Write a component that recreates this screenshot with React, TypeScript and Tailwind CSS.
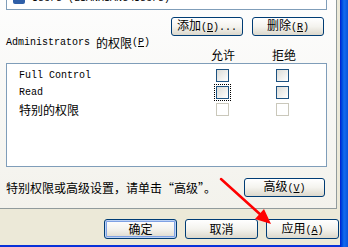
import * as React from 'react'

const CJK = "font-['Noto_Sans_CJK_SC',sans-serif] text-[12px]"
const LAT = "font-['Liberation_Mono','DejaVu_Sans_Mono',monospace] text-[10px]"

function Mixed({ text }: { text: string }): React.JSX.Element {
  // ASCII runs render at the 6px mono width, the rest as 12px CJK
  const runs = text.match(/[\x00-\x7f]+|[^\x00-\x7f]+/g) ?? []
  return (
    <>
      {runs.map((run, i) =>
        /^[\x00-\x7f]/.test(run) ? (
          <span key={i} className={`${LAT} whitespace-pre`}>
            {run}
          </span>
        ) : (
          <span key={i} className={CJK}>
            {run}
          </span>
        )
      )}
    </>
  )
}

function Label({
  text,
  mnemonic,
  suffix = ''
}: {
  text: string
  mnemonic?: string
  suffix?: string
}): React.JSX.Element {
  return (
    <span className="inline-flex items-baseline leading-[12px] text-black">
      <span className={CJK}>{text}</span>
      {mnemonic ? (
        <span className={`${LAT} whitespace-pre`}>
          (<span className="underline">{mnemonic}</span>){suffix}
        </span>
      ) : null}
    </span>
  )
}

function XpButton({
  width,
  isDefault = false,
  children
}: {
  width: string
  isDefault?: boolean
  children: React.ReactNode
}): React.JSX.Element {
  return (
    <div
      className={`${width} flex h-full items-center justify-center rounded-[3px] border border-[#003C74] bg-gradient-to-b from-white via-[#F4F3EE] to-[#DCD8CC] ${
        isDefault ? 'shadow-[inset_0_0_0_1px_#BCD2F5,inset_0_0_0_2px_#7FA1E3]' : ''
      }`}
    >
      {children}
    </div>
  )
}

function Check({ disabled = false }: { disabled?: boolean }): React.JSX.Element {
  return disabled ? (
    <div className="size-[13px] border border-[#CAC8BB] bg-white" />
  ) : (
    <div className="size-[13px] border border-[#1C5180] bg-gradient-to-br from-[#DCDCD7] to-white" />
  )
}

function PermRow({
  name,
  disabled = false,
  focused = false
}: {
  name: string
  disabled?: boolean
  focused?: boolean
}): React.JSX.Element {
  return (
    <div className="flex h-[17px] items-center pl-[12px]">
      <div className="flex w-[197px] items-center leading-[12px]">
        <Mixed text={name} />
      </div>
      <div className="relative">
        <Check disabled={disabled} />
        {focused ? (
          <div className="absolute -inset-[2px] border border-dotted border-black" />
        ) : null}
      </div>
      <div className="ml-[47px]">
        <Check disabled={disabled} />
      </div>
    </div>
  )
}

export default function App(): React.JSX.Element {
  return (
    <div className="relative flex h-[247px] w-[348px] overflow-hidden bg-[#ECE9D8] text-black">
      <div className="flex w-[340px] flex-col">
        <div className="h-[209px] w-[337px] border-r border-b border-[#919B9C] bg-gradient-to-b from-[#FDFDFD] to-[#F3F2EC] pl-[6px]">
          <div className="h-[10px] w-[321px] overflow-hidden border-x border-b border-[#7F9DB9] bg-white">
            <div className="-mt-[9px] flex h-[14px] items-center gap-[7px] pl-[6px]">
              <div className="size-[12px] rounded-[2px] bg-[#2F5FA8]" />
              <Mixed text="Users (LIANXIANG\Users)" />
            </div>
          </div>

          <div className="mt-[7px] flex h-[19px] gap-[9px] pl-[165px]">
            <XpButton width="w-[72px]">
              <Label text="添加" mnemonic="D" suffix="..." />
            </XpButton>
            <XpButton width="w-[72px]">
              <Label text="删除" mnemonic="R" />
            </XpButton>
          </div>

          <div className="mt-[1px] flex h-[12px] items-center leading-[12px]">
            <Mixed text="Administrators 的权限" />
            <span className={`${LAT} whitespace-pre`}>
              (<span className="underline">P</span>)
            </span>
          </div>

          <div className="flex h-[12px] items-center gap-[37px] pl-[205px] leading-[12px]">
            <span className={CJK}>允许</span>
            <span className={CJK}>拒绝</span>
          </div>

          <div className="mt-[2px] h-[104px] w-[321px] border border-[#7F9DB9] bg-white pt-[3px]">
            <PermRow name="Full Control" />
            <PermRow name="Read" focused />
            <PermRow name="特别的权限" disabled />
          </div>

          <div className="mt-[11px] flex h-[19px] w-[321px] items-center pr-[2px]">
            <div className="flex-1 leading-[12px]">
              <span className={CJK}>特别权限或高级设置，请单击“高级”。</span>
            </div>
            <XpButton width="w-[81px]">
              <Label text="高级" mnemonic="V" />
            </XpButton>
          </div>
        </div>

        <div className="mt-[10px] flex h-[20px] gap-[8px] pl-[104px]">
          <XpButton width="w-[73px]" isDefault>
            <Label text="确定" />
          </XpButton>
          <XpButton width="w-[73px]">
            <Label text="取消" />
          </XpButton>
          <XpButton width="w-[73px]">
            <Label text="应用" mnemonic="A" />
          </XpButton>
        </div>
        <div className="mt-auto h-[2px] w-[348px] bg-[#0831D9]" />
      </div>
      <div className="w-[8px] bg-gradient-to-r from-[#0019CF] via-[#166AEE] to-[#0855DD]" />

      <svg className="pointer-events-none absolute left-0 top-0" width="348" height="247">
        <line x1="221" y1="179" x2="262" y2="216" stroke="#FF0000" strokeWidth="2.5" strokeLinecap="round" />
        <polygon points="271,224 255,219 264,209" fill="#FF0000" />
      </svg>
    </div>
  )
}
